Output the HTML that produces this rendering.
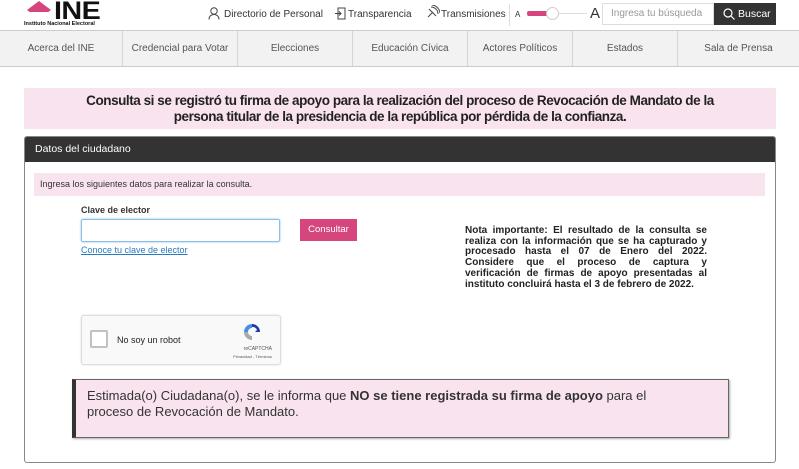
<!DOCTYPE html>
<html><head><meta charset="utf-8"><style>
*{box-sizing:border-box;margin:0;padding:0}
body{width:799px;height:469px;background:#fff;font-family:"Liberation Sans",Arial,sans-serif;color:#333;position:relative;overflow:hidden}
.top{position:absolute;left:0;top:0;width:799px;height:30px;background:#fff}
.nav{position:absolute;left:0;top:30px;width:799px;height:37px;background:#f2f2f2;border-top:1px solid #ccc;border-bottom:1px solid #ccc;display:flex}
.nav div{height:35px;line-height:35px;text-align:center;font-size:10px;color:#555;border-right:1px solid #d5d5d5}
.t{position:absolute;font-size:10px;color:#333;top:9px}
.title{position:absolute;left:24px;top:88px;width:752px;height:41px;background:#f9e3ef;text-align:center;font-weight:bold;font-size:13.5px;line-height:16px;padding-top:5px;color:#222;letter-spacing:-0.45px}
.panel{position:absolute;left:24px;top:136px;width:752px;height:327px;border:1px solid #888;border-radius:3px}
.ph{height:25px;background:#333;color:#fff;font-size:10.5px;line-height:25px;padding-left:10px;border-radius:2px 2px 0 0}
</style></head><body>
<div class="top">
 <svg style="position:absolute;left:27px;top:1px" width="24" height="18"><polygon points="12,0 24,9 12,18 0,9" fill="#d5457e"/><rect x="0" y="11" width="24" height="9" fill="#fff"/></svg>
 <div style="position:absolute;left:54px;top:-3px;font-size:25px;font-weight:900;color:#111;letter-spacing:-0.5px;transform:scaleX(1.15);transform-origin:left">INE</div>
 <div style="position:absolute;left:24px;top:21px;font-size:5.5px;font-weight:bold;color:#111">Instituto Nacional Electoral</div>
 <svg style="position:absolute;left:208px;top:7px" width="12" height="13" fill="none" stroke="#444" stroke-width="1"><circle cx="6" cy="4" r="3.2"/><path d="M1 12.5c0-3.5 2.5-5 5-5s5 1.5 5 5"/></svg>
 <div class="t" style="left:224px">Directorio de Personal</div>
 <svg style="position:absolute;left:334px;top:7px" width="12" height="13" fill="none" stroke="#444" stroke-width="1"><rect x="4" y="1" width="7" height="11"/><path d="M1 6.5h6M5 4.5l2 2-2 2"/></svg>
 <div class="t" style="left:348px">Transparencia</div>
 <svg style="position:absolute;left:426px;top:5px" width="14" height="14" fill="none" stroke="#444" stroke-width="1"><path d="M2 12l5-5M3 4l7 7M5 2a7 7 0 0 1 7 7M6 0a9 9 0 0 1 8 8"/></svg>
 <div class="t" style="left:441px">Transmisiones</div>
 <div style="position:absolute;left:509px;top:4px;width:1px;height:22px;background:#ddd"></div>
 <div style="position:absolute;left:515px;top:10px;font-size:8px">A</div>
 <div style="position:absolute;left:527px;top:11px;width:30px;height:5px;background:#d5457e;border-radius:2px"></div>
 <div style="position:absolute;left:557px;top:13px;width:30px;height:1px;background:#ddd"></div>
 <div style="position:absolute;left:546px;top:7px;width:13px;height:13px;border-radius:50%;background:#fff;border:1px solid #ccc"></div>
 <div style="position:absolute;left:590px;top:5px;font-size:15px">A</div>
 <div style="position:absolute;left:602px;top:3px;width:112px;height:22px;border:1px solid #ddd;font-size:10px;color:#999;line-height:20px;padding-left:8px">Ingresa tu búsqueda</div>
 <div style="position:absolute;left:714px;top:3px;width:62px;height:22px;background:#333;color:#fff;font-size:10.5px;line-height:22px"><svg style="position:absolute;left:9px;top:5px" width="12" height="12" fill="none" stroke="#fff" stroke-width="1.2"><circle cx="5" cy="5" r="4"/><path d="M8 8l3.5 3.5"/></svg><span style="position:absolute;left:24px">Buscar</span></div>
</div>
<div class="nav">
 <div style="width:123px">Acerca del INE</div><div style="width:115px">Credencial para Votar</div><div style="width:115px">Elecciones</div><div style="width:115px">Educación Cívica</div><div style="width:105px">Actores Políticos</div><div style="width:105px">Estados</div><div style="width:121px;border:0">Sala de Prensa</div>
</div>
<div class="title">Consulta si se registró tu firma de apoyo para la realización del proceso de Revocación de Mandato de la<br>persona titular de la presidencia de la república por pérdida de la confianza.</div>
<div class="panel">
 <div class="ph">Datos del ciudadano</div>
 <div style="position:absolute;left:9px;top:36px;width:731px;height:23px;background:#f9e3ef;font-size:9px;line-height:23px;padding-left:6px">Ingresa los siguientes datos para realizar la consulta.</div>
 <div style="position:absolute;left:56px;top:68px;font-size:9px;font-weight:bold">Clave de elector</div>
 <div style="position:absolute;left:56px;top:82px;width:199px;height:23px;border:1px solid #8ac0e8;border-radius:2px;box-shadow:0 0 2px #8ac0e8"></div>
 <div style="position:absolute;left:56px;top:108px;font-size:9px;color:#2a7ac0;text-decoration:underline">Conoce tu clave de elector</div>
 <div style="position:absolute;left:275px;top:82px;width:57px;height:22px;background:#d5457e;color:#fff;font-size:9.5px;line-height:22px;text-align:center">Consultar</div>
 <div style="position:absolute;left:440px;top:89px;width:242px;font-size:10px;font-weight:bold;line-height:10.7px;text-align:justify;text-align-last:left;color:#222">Nota importante: El resultado de la consulta se realiza con la información que se ha capturado y procesado hasta el 07 de Enero del 2022. Considere que el proceso de captura y verificación de firmas de apoyo presentadas al instituto concluirá hasta el 3 de febrero de 2022.</div>
 <div style="position:absolute;left:56px;top:178px;width:200px;height:50px;border:1px solid #ddd;border-radius:3px;background:#f9f9f9;box-shadow:0 0 2px #ddd">
  <div style="position:absolute;left:8px;top:14px;width:18px;height:18px;border:2px solid #c1c1c1;border-radius:2px;background:#fff"></div>
  <div style="position:absolute;left:35px;top:19px;font-size:9px;color:#222">No soy un robot</div>
  <svg style="position:absolute;left:160px;top:6px" width="20" height="20"><path d="M10 2a8 8 0 0 1 8 8h-5l2-2A5 5 0 0 0 10 5z" fill="#1c3aa9"/><path d="M2 10a8 8 0 0 1 8-8v4a4 4 0 0 0-4 4z" fill="#4a90e2"/><path d="M10 18a8 8 0 0 1-8-8h4a4 4 0 0 0 4 4z" fill="#aaa"/></svg>
  <div style="position:absolute;right:8px;top:30px;font-size:5px;color:#555">reCAPTCHA</div>
  <div style="position:absolute;right:8px;top:38px;font-size:4px;color:#555">Privacidad - Términos</div>
 </div>
 <div style="position:absolute;left:47px;top:242px;width:657px;height:59px;background:#f9e3ef;border:1px solid #666;border-left:4px solid #333;font-size:13px;line-height:16px;padding:8px 0 0 11px;color:#333;box-shadow:1px 1px 2px #aaa">Estimada(o) Ciudadana(o), se le informa que <b>NO se tiene registrada su firma de apoyo</b> para el<br>proceso de Revocación de Mandato.</div>
</div>
</body></html>
